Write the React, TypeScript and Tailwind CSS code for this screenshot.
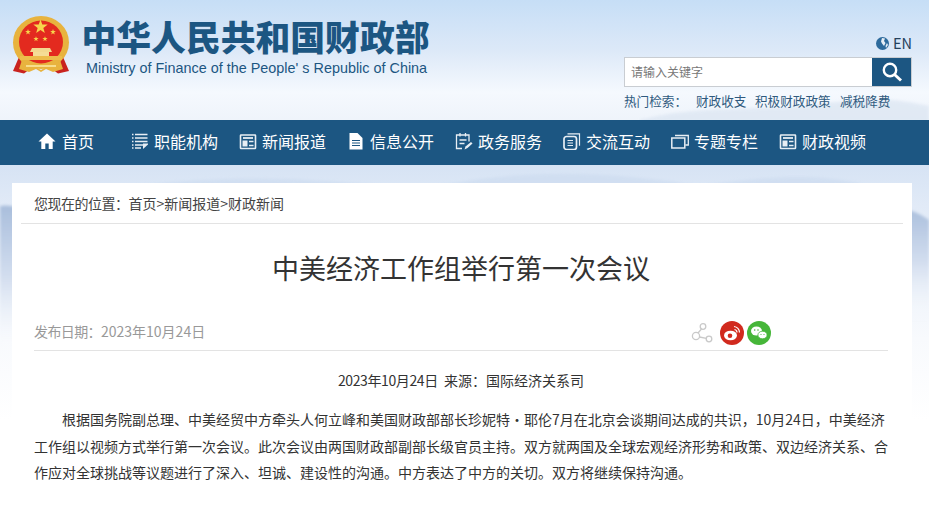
const navItems = [
  { label: "首页", icon: "home", w: "w-[93px] gap-[6px]" },
  { label: "职能机构", icon: "list", w: "w-[108px] gap-[5px]" },
  { label: "新闻报道", icon: "news", w: "w-[108px] gap-[5px]" },
  { label: "信息公开", icon: "doc", w: "w-[108px] gap-[5px]" },
  { label: "政务服务", icon: "pen", w: "w-[108px] gap-[5px]" },
  { label: "交流互动", icon: "copy", w: "w-[108px] gap-[5px]" },
  { label: "专题专栏", icon: "tab", w: "w-[108px] gap-[5px]" },
  { label: "财政视频", icon: "news", w: "w-[108px] gap-[5px]" },
];

function NavIcon({ name }: { name: string }) {
  return (
    <svg width="18" height="18" viewBox="0 0 18 18" fill="none" stroke="#e8eef4" strokeWidth="1.4" className="shrink-0">
      {name === "home" && <path d="M9 1.5L0.5 9.5h2.8V17h4v-5.5h3.4V17h4V9.5h2.8z" fill="#fff" stroke="none" />}
      {name === "list" && (
        <>
          <path d="M1 2.5h1.5M4 2.5h12.5M1 6h1.5M4 6h12.5M1 9.500h1.500M4 9.500h12.500M1 13h1.500M4 13h9M1 16h1.500M4 16h6" strokeWidth="1.700" />
          <path d="M12 17l5-4.500v-1h-5z" fill="#e8eef4" stroke="none" />
        </>
      )}
      {name === "news" && (
        <>
          <rect x="1.500" y="3" width="15" height="13.500" rx="0.500" strokeWidth="1.600" />
          <path d="M4 6h10" strokeWidth="1.800" />
          <rect x="3.500" y="8.500" width="5" height="6" fill="#e8eef4" stroke="none" />
          <path d="M10 9.500h4.500M10 13.500h4.500" strokeWidth="1.600" />
        </>
      )}
      {name === "doc" && (
        <>
          <path d="M2.500 1h8l5 5v11.500h-13z" fill="#fff" stroke="none" />
          <path d="M5 8.500h8M5 11h8M5 13.500h8" stroke="#1c5682" strokeWidth="1.100" />
        </>
      )}
      {name === "pen" && (
        <>
          <path d="M7 16.500H1.500V3h12.500v6.500" strokeWidth="1.300" />
          <path d="M5 1v3.500M10.500 1v3.500M4.500 8h7M4.500 11.500h5" strokeWidth="1.300" />
          <path d="M9.500 17.500l1-3 5.500-4.500 1.500 1.500-5 4.500z" fill="#e8eef4" stroke="none" />
        </>
      )}
      {name === "copy" && (
        <>
          <rect x="1" y="4.500" width="12.500" height="13" rx="2.500" strokeWidth="1.700" />
          <path d="M4.500 1.800h12v12" strokeWidth="1.200" />
          <path d="M4.500 8.500h5.500M4.500 11h5.500M4.500 13.500h5.500" strokeWidth="1" />
        </>
      )}
      {name === "tab" && (
        <>
          <rect x="0.800" y="6" width="13" height="10" strokeWidth="1.500" />
          <path d="M4 3.500h13.300v9.500h-3" strokeWidth="1.300" />
        </>
      )}
    </svg>
  );
}

function Emblem() {
  const star = "0,-5 1.200,-1.600 4.800,-1.600 1.900,0.600 2.900,4 0,2 -2.900,4 -1.900,0.600 -4.800,-1.600 -1.200,-1.600";
  return (
    <svg width="58" height="60" viewBox="0 0 58 60" className="shrink-0">
      <path d="M7 42L1 56l11 2.500 8-6zM51 42l6 14-11 2.500-8-6z" fill="#c9231f" />
      <ellipse cx="29" cy="27.500" rx="28" ry="26.500" fill="#e8b33e" />
      <ellipse cx="29" cy="27" rx="22" ry="21.500" fill="#e32a1f" />
      <polygon points={star} fill="#f7d44c" transform="translate(28.500 12) scale(1.500)" />
      <polygon points={star} fill="#f7d44c" transform="translate(16 17) scale(.6)" />
      <polygon points={star} fill="#f7d44c" transform="translate(41 17) scale(.6)" />
      <polygon points={star} fill="#f7d44c" transform="translate(24 24) scale(.55)" />
      <polygon points={star} fill="#f7d44c" transform="translate(33 24) scale(.55)" />
      <path d="M20 33h18l2 4H18z" fill="#f3d98f" />
      <rect x="21" y="37" width="16" height="5" fill="#f5dd96" />
      <rect x="8" y="41" width="42" height="4" fill="#edbd4b" />
      <path d="M10 45c3 6 9 3 12 6l7 4 7-4c3-3 9 0 12-6l3 9-10 3-7-3-5 3-5-3-7 3-10-3z" fill="#e8b33e" />
      <rect x="14" y="50" width="30" height="2" fill="#f7dd8c" />
    </svg>
  );
}

export default function App() {
  return (
    <div className="relative h-[513px] w-[929px] overflow-hidden bg-white font-['Noto_Sans_CJK_SC','Liberation_Sans',sans-serif] text-[#333]">
      {/* page backdrop: sky and mountains */}
      <svg width="929" height="513" viewBox="0 0 929 513" className="absolute inset-0">
        <defs>
          <linearGradient id="sky" x1="0" y1="0" x2="0" y2="1">
            <stop offset="0" stopColor="#c6def6" />
            <stop offset="0.1" stopColor="#dde9f8" />
            <stop offset="0.18" stopColor="#f5f9fe" />
            <stop offset="0.24" stopColor="#eef3fa" />
            <stop offset="0.32" stopColor="#d6e3f4" />
            <stop offset="0.4" stopColor="#e1eaf7" />
            <stop offset="0.66" stopColor="#f8fafd" />
            <stop offset="0.82" stopColor="#ffffff" />
          </linearGradient>
          <linearGradient id="hill" x1="0" y1="0" x2="0" y2="1">
            <stop offset="0" stopColor="#a9bedc" />
            <stop offset="0.5" stopColor="#d3deef" />
            <stop offset="1" stopColor="#f9fbfd" stopOpacity="0" />
          </linearGradient>
          <filter id="soft">
            <feGaussianBlur stdDeviation="1.500" />
          </filter>
        </defs>
        <rect width="929" height="513" fill="url(#sky)" />
        <path d="M640 120C700 104 760 112 820 104S900 100 929 106V122H640z" fill="#dbe5f2" opacity="0.7" filter="url(#soft)" />
        <path d="M0 206C10 204 22 208 40 216V350H0z" fill="url(#hill)" filter="url(#soft)" />
        <path d="M890 206C905 208 918 212 929 220V320H890z" fill="url(#hill)" filter="url(#soft)" />
        <path d="M50 200C200 170 300 176 420 190C520 166 620 172 700 186C800 170 860 176 900 200z" fill="#c9d9ee" opacity="0.55" filter="url(#soft)" />
      </svg>

      <header className="relative flex h-[120px] justify-between">
        <div className="flex pl-[12px] pt-[15px]">
          <Emblem />
          <div className="ml-[11.5px] flex flex-col">
            <div className="mt-[4.500px] h-[38px] font-['Liberation_Sans','Noto_Sans_CJK_SC',sans-serif] text-[34.800px] leading-[38px] font-black whitespace-nowrap text-[#1c5682]">中华人民共和国财政部</div>
            <div className="ml-[4.5px] mt-[1px] font-['Liberation_Sans',sans-serif] text-[14.4px] leading-[18px] whitespace-nowrap text-[#1c5682]">
              Ministry of Finance of the People' s Republic of China
            </div>
          </div>
        </div>
        <div className="flex w-[305px] flex-col pr-[17px] pt-[33px]">
          <div className="flex h-[20px] items-center justify-end gap-[4px] text-[14.5px] text-[#25415c]">
            <svg width="13" height="13" viewBox="0 0 13 13">
              <circle cx="6.500" cy="6.500" r="6.500" fill="#2d6a9c" />
              <path d="M6 1l3 .5-1 2.500 1.500 2-1.500 3-2-2.500-1-2zM11 6l1 2-2 3-.5-2z" fill="#e6eef6" />
            </svg>
            <span>EN</span>
          </div>
          <div className="mt-[4px] flex h-[30px] w-[288px] border border-[#c9cdd2] bg-white">
            <div className="flex flex-1 items-center pl-[6px] text-[12px] text-[#777]">请输入关键字</div>
            <div className="flex w-[39px] items-center justify-center bg-[#1c5682]">
              <svg width="22" height="22" viewBox="0 0 22 22" fill="none" stroke="#fff">
                <circle cx="9" cy="9" r="6.200" strokeWidth="2.400" />
                <path d="M13.500 13.500L20 19.500" strokeWidth="3" />
              </svg>
            </div>
          </div>
          <div className="mt-[5px] flex text-[12.6px] leading-[18px] whitespace-nowrap text-[#2f5a7e]">
            <span className="w-[72px]">热门检索：</span>
            <span className="w-[59px]">财政收支</span>
            <span className="w-[85px]">积极财政政策</span>
            <span>减税降费</span>
          </div>
        </div>
      </header>

      <nav className="relative flex h-[45px] items-center bg-[#1c5682] pb-[4px] pl-[38px] text-white">
        {navItems.map((item) => (
          <div key={item.label} className={`flex items-center text-[16px] whitespace-nowrap ${item.w}`}>
            <NavIcon name={item.icon} />
            <span>{item.label}</span>
          </div>
        ))}
      </nav>

      <main className="relative mx-[12px] mt-[18px] h-[330px] w-[900px] bg-white">
        <div className="mx-[9px] flex h-[41px] items-center border-b border-[#e3e3e3] pl-[13px] text-[14px] text-[#444]">
          <span className="tracking-[-0.5px]">您现在的位置：</span>首页&gt;新闻报道&gt;财政新闻
        </div>
        <div className="pl-[22px] pr-[24px]">
          <h1 className="mt-[20px] text-center text-[27px] leading-[47px] font-normal text-[#333]">中美经济工作组举行第一次会议</h1>
          <div className="flex h-[60px] items-center justify-between border-b border-[#e3e3e3] pt-[25px] text-[14px] text-[#999]">
            <span className="mb-[3px]">
              <span className="tracking-[-0.6px]">发布日期：</span>2023年10月24日
            </span>
            <div className="mr-[117px] flex items-center">
              <svg width="22" height="22" viewBox="0 0 22 22" fill="none" stroke="#c9c9c9" strokeWidth="1.300" className="mr-[7px]">
                <circle cx="12" cy="4.500" r="2.800" />
                <circle cx="5" cy="14" r="3.600" />
                <circle cx="18" cy="17" r="2.800" />
                <path d="M10.500 7L7 11M8.500 15l6.800 1.300" />
              </svg>
              <svg width="24" height="24" viewBox="0 0 24 24" className="mr-[3px]">
                <circle cx="12" cy="12" r="12" fill="#d12a1e" />
                <ellipse cx="10.500" cy="14.500" rx="6.500" ry="4.800" fill="#fff" />
                <circle cx="10" cy="14.800" r="2.300" fill="#d12a1e" />
                <path d="M14 5.500a6 6 0 0 1 5.500 6M14.500 8.500a3 3 0 0 1 2.500 3" fill="none" stroke="#fff" strokeWidth="1.200" />
              </svg>
              <svg width="24" height="24" viewBox="0 0 24 24">
                <circle cx="12" cy="12" r="12" fill="#46b639" />
                <ellipse cx="9.500" cy="10" rx="5.500" ry="4.500" fill="#fff" />
                <ellipse cx="15.500" cy="14" rx="4.600" ry="3.800" fill="#fff" stroke="#46b639" strokeWidth="0.800" />
                <circle cx="7.700" cy="9" r="0.800" fill="#46b639" />
                <circle cx="11" cy="9" r="0.800" fill="#46b639" />
                <circle cx="14" cy="13.500" r="0.600" fill="#46b639" />
                <circle cx="17" cy="13.500" r="0.600" fill="#46b639" />
              </svg>
            </div>
          </div>
          <div className="mt-[19px] text-center text-[14px] leading-[21px]">
            <span className="tracking-[-0.4px]">2023年10月24日</span>&nbsp;&nbsp;来源：国际经济关系司
          </div>
          <p className="mt-[15px] indent-[28px] text-[14px] leading-[26.5px] text-[#333]">
            根据国务院副总理、中美经贸中方牵头人何立峰和美国财政部部长珍妮特·耶伦7月在北京会谈期间达成的共识，10月24日，中美经济工作组以视频方式举行第一次会议。此次会议由两国财政部副部长级官员主持。双方就两国及全球宏观经济形势和政策、双边经济关系、合作应对全球挑战等议题进行了深入、坦诚、建设性的沟通。中方表达了中方的关切。双方将继续保持沟通。
          </p>
        </div>
      </main>
    </div>
  );
}
